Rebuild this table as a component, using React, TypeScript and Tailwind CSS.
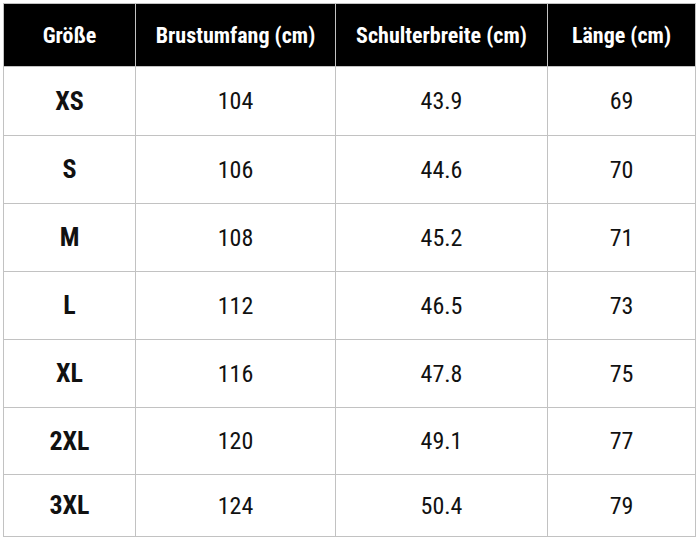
import React from 'react'

const headers = ['Größe', 'Brustumfang (cm)', 'Schulterbreite (cm)', 'Länge (cm)']

const rows: [string, string, string, string][] = [
  ['XS', '104', '43.9', '69'],
  ['S', '106', '44.6', '70'],
  ['M', '108', '45.2', '71'],
  ['L', '112', '46.5', '73'],
  ['XL', '116', '47.8', '75'],
  ['2XL', '120', '49.1', '77'],
  ['3XL', '124', '50.4', '79'],
]

export default function App() {
  return (
    <div
      className="w-[700px] h-[560px] bg-white pl-[3px] pt-[3px]"
      style={{ fontFamily: '"Liberation Sans Narrow", "Arial Narrow", "Roboto Condensed", "DejaVu Sans Condensed", sans-serif' }}
    >
      <div className="grid w-[693px] grid-cols-[131px_199px_211px_147px] grid-rows-[62px_68px_67px_67px_67px_67px_66px_61px] gap-px bg-[#c2c2c2] p-px">
        {headers.map((h) => (
          <div key={h} className="flex items-center justify-center bg-black pt-px text-[22px] font-bold text-white">
            {h}
          </div>
        ))}
        {rows.map((r) =>
          r.map((v, i) => (
            <div
              key={r[0] + i}
              className={`flex items-center justify-center bg-white text-[#111] ${i === 0 ? 'text-[26px] font-bold' : 'text-[24px]'}`}
            >
              {v}
            </div>
          )),
        )}
      </div>
    </div>
  )
}
